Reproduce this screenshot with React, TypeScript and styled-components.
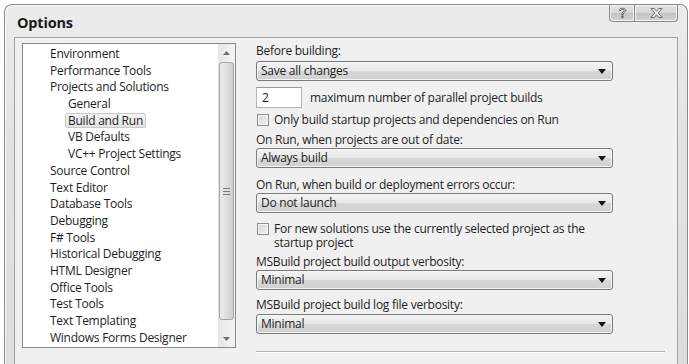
import styled, { createGlobalStyle } from 'styled-components'

const GlobalStyle = createGlobalStyle`
  html, body {
    margin: 0;
    padding: 0;
    background: #ffffff;
  }
  body {
    width: 689px;
    height: 364px;
    overflow: hidden;
    font-family: 'Open Sans', 'Noto Sans', Arial, sans-serif;
    color: #1e1e1e;
  }
`

const Frame = styled.div`
  margin: 4px 0 0 4px;
  width: 684px;
  height: 360px;
  box-sizing: border-box;
  border: 1px solid #8c8c8c;
  border-bottom: none;
  border-radius: 8px 8px 0 0;
  background: linear-gradient(180deg, #ececec 0%, #e2e2e2 40%, #dedede 100%);
  box-shadow: inset 1px 1px 0 #fafafa;
  overflow: hidden;
`

const TitleBar = styled.div`
  height: 32px;
  display: flex;
  align-items: flex-start;
  justify-content: space-between;
  padding-left: 12px;
  padding-right: 9px;
`

const Title = styled.div`
  font-size: 14.5px;
  font-weight: 700;
  line-height: 18px;
  margin-top: 9px;
  color: #1a1a1a;
  letter-spacing: -0.2px;
`

const CaptionButtons = styled.div`
  display: flex;
`

const CaptionButton = styled.div<{ $w: number; $left?: boolean }>`
  width: ${(p) => p.$w}px;
  height: 17px;
  box-sizing: border-box;
  border: 1px solid #8a8a8a;
  border-top: none;
  border-left: ${(p) => (p.$left ? '1px solid #8a8a8a' : 'none')};
  border-radius: ${(p) => (p.$left ? '0 0 0 4px' : '0 0 4px 0')};
  background: linear-gradient(180deg, #e6e6e6 0%, #d6d6d6 50%, #c4c4c4 51%, #d2d2d2 100%);
  box-shadow: inset 0 0 0 1px #f2f2f2;
  display: flex;
  align-items: center;
  justify-content: center;
`

const Client = styled.div`
  margin-left: 9px;
  width: 664px;
  height: 340px;
  box-sizing: border-box;
  border: 1px solid #a2a2a2;
  background: #f0f0f0;
  display: flex;
  padding: 5px 0 0 7px;
  gap: 20px;
`

const ListBox = styled.div`
  width: 214px;
  height: 305px;
  box-sizing: border-box;
  border: 1px solid #8a8a8a;
  background: #ffffff;
  display: flex;
`

const Items = styled.div`
  flex: 1;
  padding-top: 2px;
`

const Item = styled.div<{ $level: number; $selected?: boolean }>`
  height: 16.7px;
  line-height: 16.7px;
  font-size: 12px;
  letter-spacing: -0.25px;
  padding-left: ${(p) => (p.$level ? 44 : 26)}px;
  white-space: nowrap;
  color: #1e1e1e;

  span {
    display: inline-block;
    padding: 0 2px;
    margin-left: -2px;
    border-radius: 2px;
    border: 1px solid ${(p) => (p.$selected ? '#c8c8c8' : 'transparent')};
    background: ${(p) => (p.$selected ? 'linear-gradient(180deg, #f4f4f4, #e4e4e4)' : 'transparent')};
    line-height: 13px;
  }
`

const ScrollBar = styled.div`
  width: 17px;
  display: flex;
  flex-direction: column;
  background: linear-gradient(90deg, #e6e6e6, #f4f4f4);
`

const ScrollArrow = styled.div`
  height: 17px;
  display: flex;
  align-items: center;
  justify-content: center;
`

const Thumb = styled.div`
  margin: 1px 1px;
  height: 258px;
  box-sizing: border-box;
  border: 1px solid #a4a4a4;
  border-radius: 3px;
  background: linear-gradient(90deg, #ececec 0%, #dedede 50%, #cfcfcf 100%);
  display: flex;
  align-items: center;
  justify-content: center;
`

const Track = styled.div`
  flex: 1;
`

const Panel = styled.div`
  width: 410px;
  display: flex;
  flex-direction: column;
  font-size: 12px;
  letter-spacing: -0.25px;
`

const Label = styled.div<{ $mt: number }>`
  margin-top: ${(p) => p.$mt}px;
  line-height: 15px;
  white-space: nowrap;
`

const Combo = styled.div<{ $mt: number }>`
  margin-top: ${(p) => p.$mt}px;
  width: 357px;
  height: 20px;
  box-sizing: border-box;
  border: 1px solid #7a7a7a;
  border-radius: 3px;
  background: linear-gradient(180deg, #f3f3f3 0%, #e8e8e8 48%, #d8d8d8 52%, #d0d0d0 100%);
  box-shadow: inset 0 0 0 1px #f6f6f6;
  display: flex;
  align-items: center;
  justify-content: space-between;
  padding: 0 6px 0 4px;
  line-height: 18px;
`

const InputRow = styled.div`
  margin-top: 6px;
  display: flex;
  align-items: center;
  gap: 8px;
`

const TextBox = styled.div`
  width: 46px;
  height: 21px;
  box-sizing: border-box;
  border: 1px solid #b4b4b4;
  border-top-color: #9a9a9a;
  background: #ffffff;
  padding-left: 5px;
  line-height: 19px;
`

const CheckRow = styled.div<{ $mt: number }>`
  margin-top: ${(p) => p.$mt}px;
  display: flex;
  align-items: flex-start;
  gap: 5px;
  line-height: 14px;
  padding-left: 1px;
`

const CheckLines = styled.div`
  display: flex;
  flex-direction: column;
`

const CheckBox = styled.div`
  flex: none;
  width: 12px;
  height: 12px;
  margin-top: 1px;
  box-sizing: border-box;
  border: 1px solid #8e8e8e;
  background: linear-gradient(135deg, #d6d6d6 0%, #f2f2f2 100%);
  box-shadow: inset 0 0 0 1px #f4f4f4;
`

const Separator = styled.div`
  margin-top: 17px;
  width: 409px;
  height: 0;
  border-top: 1px solid #b0b0b0;
  border-bottom: 1px solid #ffffff;
`

const Arrow = ({ up }: { up?: boolean }) => (
  <svg width="7" height="4" viewBox="0 0 7 4">
    <path d={up ? 'M0 4 L3.5 0 L7 4 Z' : 'M0 0 L7 0 L3.5 4 Z'} fill="#6e6e6e" />
  </svg>
)

const ComboArrow = () => (
  <svg width="8" height="5" viewBox="0 0 8 5">
    <path d="M0 0 L8 0 L4 5 Z" fill="#151515" />
  </svg>
)

const Grip = () => (
  <svg width="7" height="7" viewBox="0 0 7 7">
    <path d="M0 0.5 H7 M0 3.5 H7 M0 6.5 H7" stroke="#7a7a7a" strokeWidth="1" />
  </svg>
)

const HelpGlyph = () => (
  <svg width="9" height="12" viewBox="0 0 8 11">
    <path
      d="M1 3 C1 0.6 7 0.6 7 3 C7 4.6 4.6 4.8 4.6 6.6 L4.6 7.4 L3.4 7.4 L3.4 6.4 C3.4 4.6 5.6 4.4 5.6 3.1 C5.6 1.9 2.4 1.9 2.4 3.2 Z M3.4 8.4 H4.6 V9.8 H3.4 Z"
      fill="#f2f2f2"
      stroke="#5e5e5e"
      strokeWidth="0.9"
    />
  </svg>
)

const CloseGlyph = () => (
  <svg width="13" height="10" viewBox="0 0 11 9">
    <path
      d="M0.5 0.5 H3.5 L5.5 3 L7.5 0.5 H10.5 L7 4.5 L10.5 8.5 H7.5 L5.5 6 L3.5 8.5 H0.5 L4 4.5 Z"
      fill="#f2f2f2"
      stroke="#5e5e5e"
      strokeWidth="0.8"
    />
  </svg>
)

const tree: { label: string; level: number; selected?: boolean }[] = [
  { label: 'Environment', level: 0 },
  { label: 'Performance Tools', level: 0 },
  { label: 'Projects and Solutions', level: 0 },
  { label: 'General', level: 1 },
  { label: 'Build and Run', level: 1, selected: true },
  { label: 'VB Defaults', level: 1 },
  { label: 'VC++ Project Settings', level: 1 },
  { label: 'Source Control', level: 0 },
  { label: 'Text Editor', level: 0 },
  { label: 'Database Tools', level: 0 },
  { label: 'Debugging', level: 0 },
  { label: 'F# Tools', level: 0 },
  { label: 'Historical Debugging', level: 0 },
  { label: 'HTML Designer', level: 0 },
  { label: 'Office Tools', level: 0 },
  { label: 'Test Tools', level: 0 },
  { label: 'Text Templating', level: 0 },
  { label: 'Windows Forms Designer', level: 0 },
]

export default function App() {
  return (
    <>
      <GlobalStyle />
      <Frame>
        <TitleBar>
          <Title>Options</Title>
          <CaptionButtons>
            <CaptionButton $w={26} $left>
              <HelpGlyph />
            </CaptionButton>
            <CaptionButton $w={43}>
              <CloseGlyph />
            </CaptionButton>
          </CaptionButtons>
        </TitleBar>
        <Client>
          <ListBox>
            <Items>
              {tree.map((t) => (
                <Item key={t.label} $level={t.level} $selected={t.selected}>
                  <span>{t.label}</span>
                </Item>
              ))}
            </Items>
            <ScrollBar>
              <ScrollArrow>
                <Arrow up />
              </ScrollArrow>
              <Thumb>
                <Grip />
              </Thumb>
              <Track />
              <ScrollArrow>
                <Arrow />
              </ScrollArrow>
            </ScrollBar>
          </ListBox>
          <Panel>
            <Label $mt={0}>Before building:</Label>
            <Combo $mt={3}>
              Save all changes
              <ComboArrow />
            </Combo>
            <InputRow>
              <TextBox>2</TextBox>
              maximum number of parallel project builds
            </InputRow>
            <CheckRow $mt={5}>
              <CheckBox />
              Only build startup projects and dependencies on Run
            </CheckRow>
            <Label $mt={5}>On Run, when projects are out of date:</Label>
            <Combo $mt={1}>
              Always build
              <ComboArrow />
            </Combo>
            <Label $mt={9}>On Run, when build or deployment errors occur:</Label>
            <Combo $mt={1}>
              Do not launch
              <ComboArrow />
            </Combo>
            <CheckRow $mt={9}>
              <CheckBox />
              <CheckLines>
                <span>For new solutions use the currently selected project as the</span>
                <span>startup project</span>
              </CheckLines>
            </CheckRow>
            <Label $mt={4}>MSBuild project build output verbosity:</Label>
            <Combo $mt={1}>
              Minimal
              <ComboArrow />
            </Combo>
            <Label $mt={7}>MSBuild project build log file verbosity:</Label>
            <Combo $mt={2}>
              Minimal
              <ComboArrow />
            </Combo>
            <Separator />
          </Panel>
        </Client>
      </Frame>
    </>
  )
}
